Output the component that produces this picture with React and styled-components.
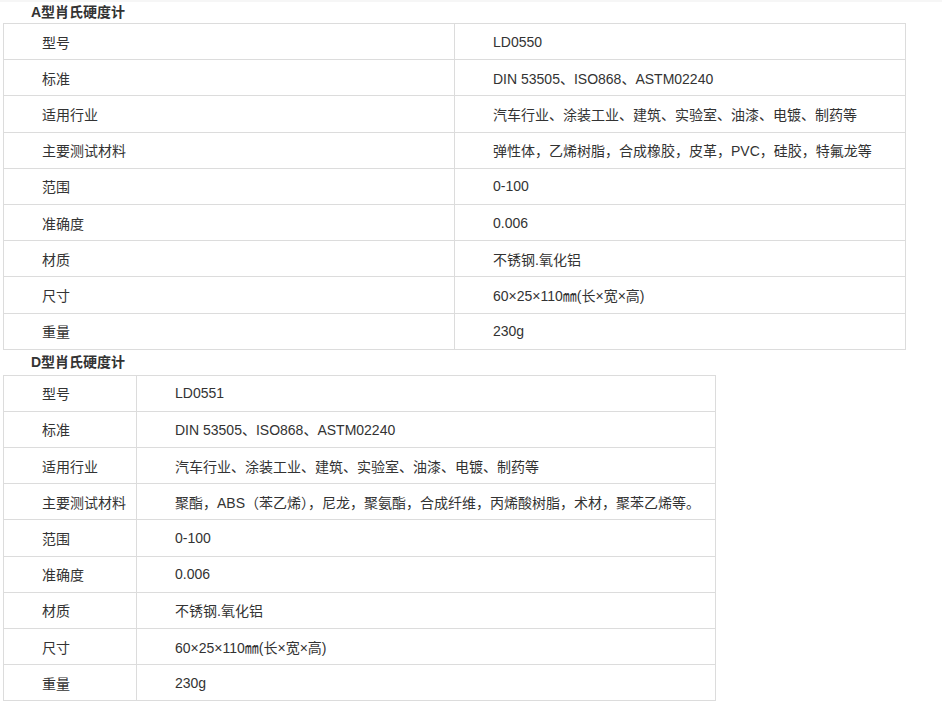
import styled, { createGlobalStyle } from "styled-components";

const GlobalStyle = createGlobalStyle`
  body {
    margin: 0;
    background: #fff;
    font-family: "Liberation Sans", "Noto Sans CJK SC", sans-serif;
    color: #333;
  }
`;

const specsA = [
  ["型号", "LD0550"],
  ["标准", "DIN 53505、ISO868、ASTM02240"],
  ["适用行业", "汽车行业、涂装工业、建筑、实验室、油漆、电镀、制药等"],
  ["主要测试材料", "弹性体，乙烯树脂，合成橡胶，皮革，PVC，硅胶，特氟龙等"],
  ["范围", "0-100"],
  ["准确度", "0.006"],
  ["材质", "不锈钢.氧化铝"],
  ["尺寸", "60×25×110㎜(长×宽×高)"],
  ["重量", "230g"],
];

const specsD = [
  ["型号", "LD0551"],
  ["标准", "DIN 53505、ISO868、ASTM02240"],
  ["适用行业", "汽车行业、涂装工业、建筑、实验室、油漆、电镀、制药等"],
  ["主要测试材料", "聚酯，ABS（苯乙烯），尼龙，聚氨酯，合成纤维，丙烯酸树脂，术材，聚苯乙烯等。"],
  ["范围", "0-100"],
  ["准确度", "0.006"],
  ["材质", "不锈钢.氧化铝"],
  ["尺寸", "60×25×110㎜(长×宽×高)"],
  ["重量", "230g"],
];

function Specs({ rows, width, labelWidth }) {
  return (
    <SpecTable width={width}>
      <colgroup>
        <col style={{ width: labelWidth }} />
        <col />
      </colgroup>
      <tbody>
        {rows.map(([k, v]) => (
          <tr key={k}>
            <td>{k}</td>
            <td>{v}</td>
          </tr>
        ))}
      </tbody>
    </SpecTable>
  );
}

export default function App() {
  return (
    <>
      <GlobalStyle />
      <Page>
        <Title>A型肖氏硬度计</Title>
        <Specs rows={specsA} width={903} labelWidth="451px" />
        <Title spaced>D型肖氏硬度计</Title>
        <Specs rows={specsD} width={713} labelWidth="133px" />
      </Page>
    </>
  );
}

const Page = styled.div`
  padding: 0 0 0 3px;
  border-top: 2px solid #f6f6f6;
`;

const Title = styled.div`
  height: ${(props) => (props.spaced ? "25px" : "21px")};
  line-height: ${(props) => (props.spaced ? "25px" : "20px")};
  padding-left: 28px;
  font-size: 14px;
  font-weight: bold;
  color: #333;
`;

const SpecTable = styled.table`
  width: ${(props) => props.width}px;
  border-collapse: collapse;
  table-layout: fixed;
  font-size: 14px;
  color: #333;

  td {
    box-sizing: border-box;
    height: 36.2px;
    padding: 0 0 0 38px;
    border: 1px solid #dcdcdc;
    vertical-align: middle;
    white-space: nowrap;
  }
`;
